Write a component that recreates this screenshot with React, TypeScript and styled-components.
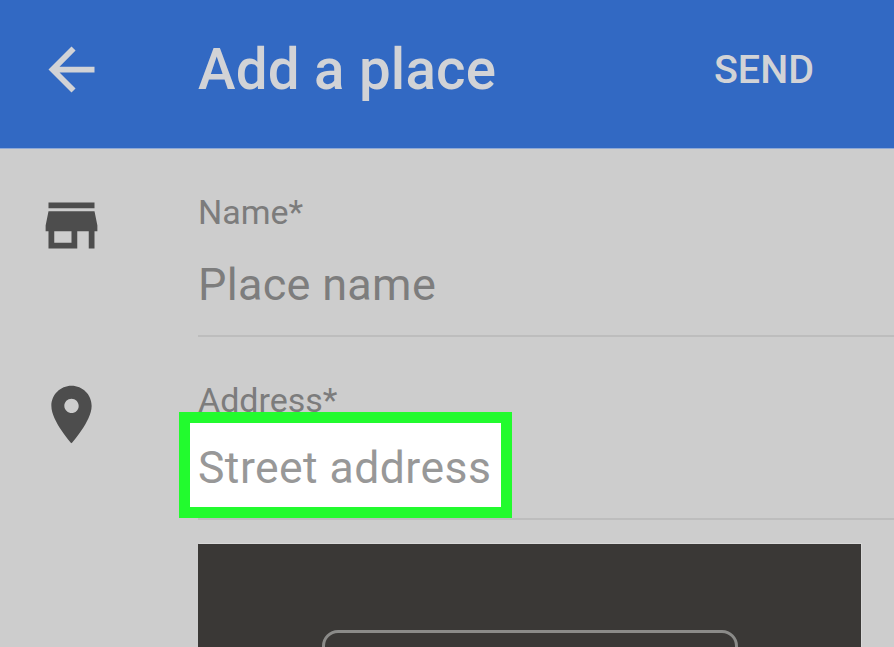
import React from "react";
import styled, { createGlobalStyle } from "styled-components";

const Global = createGlobalStyle`
  html, body { margin: 0; padding: 0; }
  body { width: 894px; height: 647px; overflow: hidden; background: #cdcdcd; font-family: Roboto, "Liberation Sans", sans-serif; }
`;
const Page = styled.div`
  width: 894px; height: 647px; overflow: hidden; background: #cdcdcd;
`;
const Header = styled.header`
  height: 148px; background: #3269c3; border-bottom: 1px solid #8fa9d6;
  display: grid; grid-template-columns: 198px 1fr auto; align-items: center;
  padding-right: 80px; color: #d2d3d6;
`;
const Glyph = styled.svg<{ $x: number; $y: number; $size: number }>`
  display: block; width: ${p => p.$size}px; height: ${p => p.$size}px;
  margin-left: ${p => p.$x}px; margin-top: ${p => p.$y}px; fill: currentColor;
`;
const Title = styled.h1`
  margin: 0 0 9px; font-size: 56.5px; font-weight: 500; line-height: 60px; letter-spacing: 0.2px;
`;
const Send = styled.span`
  font-size: 39.5px; font-weight: 500; line-height: 42px; margin-bottom: 8px; letter-spacing: 0;
`;
const Row = styled.section`
  display: grid; grid-template-columns: 198px 1fr; color: #4d4d4d;
`;
const Field = styled.div<{ $height: number; $top: number }>`
  height: ${p => p.$height}px; padding-top: ${p => p.$top}px; box-sizing: border-box;
  border-bottom: 2px solid #bdbdbd;
`;
const Label = styled.div`
  font-size: 34px; line-height: 36px; color: #7c7c7c;
`;
const Value = styled.div`
  font-size: 45px; line-height: 48px; color: #7d7d7d; margin-top: 31px; letter-spacing: 0.3px;
`;
const Highlighted = styled.div`
  position: relative; margin-top: 11px; height: 48px;
  &::before {
    content: ""; position: absolute; left: -19px; top: -17px; width: 333px; height: 106px;
    box-sizing: border-box; border: 11px solid #22fb2e; background: #fff;
  }
`;
const HighlightText = styled.span`
  position: relative; display: block; font-size: 44.5px; line-height: 48px; color: #989898; padding-top: 15px; letter-spacing: 0.45px;
`;
const Preview = styled.div`
  margin: 24px 0 0 198px; width: 663px; height: 200px; box-sizing: border-box; padding: 86px 0 0 124px;
  background: #3a3836; box-shadow: 1px -1px 0 #d8d8d8;
`;
const PreviewFrame = styled.div`
  width: 416px; height: 120px; box-sizing: border-box;
  border: 3px solid #8b8b89; border-radius: 16px;
`;

export default function App() {
  return (
    <Page>
      <Global />
      <Header>
        <Glyph $x={37} $y={-9} $size={69} viewBox="0 0 24 24">
          <path d="M20 11H7.83l5.59-5.59L12 4l-8 8 8 8 1.41-1.41L7.83 13H20v-2z" />
        </Glyph>
        <Title>Add a place</Title>
        <Send>SEND</Send>
      </Header>
      <Row>
        <Glyph $x={37} $y={42} $size={69} viewBox="0 0 24 24">
          <path d="M20 4H4v2h16V4zm1 10v-2l-1-5H4l-1 5v2h1v6h10v-6h4v6h2v-6h1zm-9 4H6v-4h6v4z" />
        </Glyph>
        <Field $height={188} $top={45}>
          <Label>Name*</Label>
          <Value>Place name</Value>
        </Field>
      </Row>
      <Row>
        <Glyph $x={37} $y={43} $size={69} viewBox="0 0 24 24">
          <path d="M12 2C8.13 2 5 5.13 5 9c0 5.25 7 13 7 13s7-7.75 7-13c0-3.87-3.13-7-7-7zm0 9.5c-1.1 0-2.5-1.12-2.5-2.5s1.12-2.5 2.5-2.5 2.5 1.12 2.5 2.5-1.12 2.5-2.5 2.5z" />
        </Glyph>
        <Field $height={183} $top={45}>
          <Label>Address*</Label>
          <Highlighted><HighlightText>Street address</HighlightText></Highlighted>
        </Field>
      </Row>
      <Preview><PreviewFrame /></Preview>
    </Page>
  );
}
